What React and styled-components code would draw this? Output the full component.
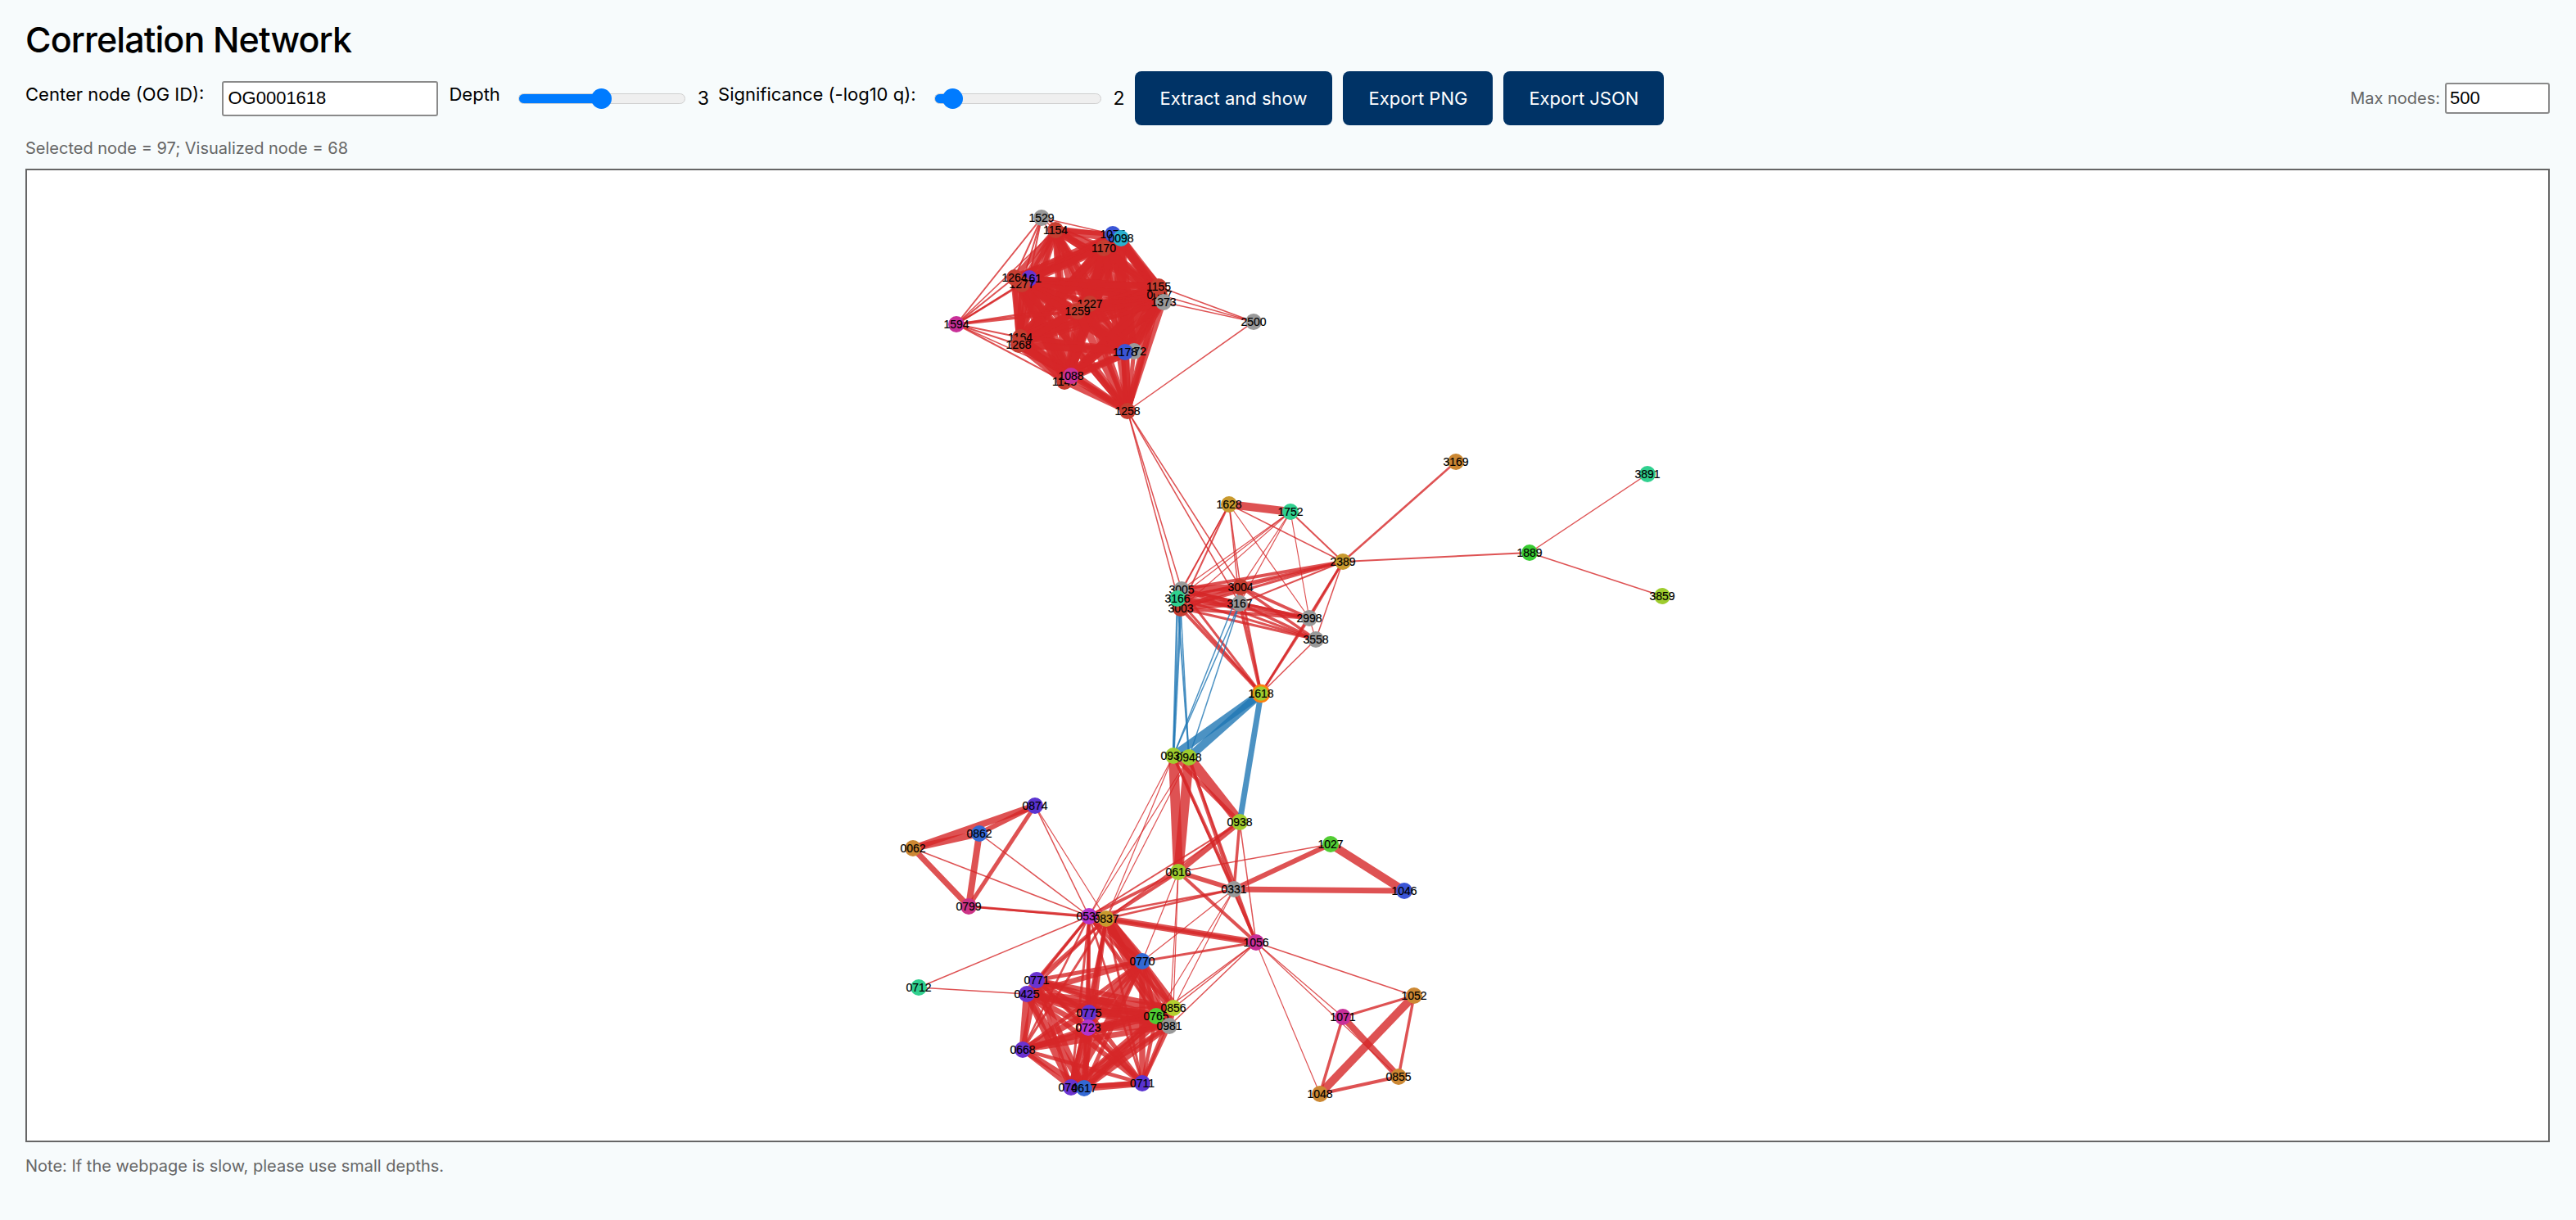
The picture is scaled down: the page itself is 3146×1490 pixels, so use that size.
import React from 'react'
import styled, { createGlobalStyle } from 'styled-components'

const GlobalStyle = createGlobalStyle`
  html, body {
    margin: 0;
    background: #f7fbfc;
    font-family: Inter, "Noto Sans", sans-serif;
  }
`

const Page = styled.div`
  box-sizing: border-box;
  height: 1490px;
  padding: 24px 32px 0 31px;
  display: flex;
  flex-direction: column;
  overflow: hidden;
`

const Title = styled.h1`
  margin: 0 0 15px;
  font-size: 43px;
  line-height: 48px;
  font-weight: 500;
  letter-spacing: -0.9px;
  color: #000;
`

const Toolbar = styled.div`
  display: flex;
  align-items: center;
  height: 66px;
  margin-bottom: 14px;
`

const Label = styled.label`
  font-size: 22px;
  color: #000;
  padding-bottom: 10px;
  margin-right: ${p => p.$after || 0}px;
  white-space: nowrap;
`

const TextInput = styled.input`
  box-sizing: border-box;
  width: 264px;
  height: 43px;
  padding: 0 5px;
  margin-right: 13px;
  background: #fff;
  border: 2px solid #8a8a8a;
  border-radius: 3px;
  font-family: "Liberation Sans", Arial, sans-serif;
  font-size: 22px;
  color: #000;
`

const Slider = styled.input`
  appearance: none;
  -webkit-appearance: none;
  width: 204px;
  height: 26px;
  margin: 0 15px 0 ${p => p.$before}px;
  background: transparent;

  &::-webkit-slider-runnable-track {
    box-sizing: border-box;
    height: 13px;
    border: 1px solid #cfcfcf;
    border-radius: 7px;
    background: linear-gradient(
      to right,
      #007bff ${p => p.$fill}%,
      #efefef ${p => p.$fill}%
    );
  }

  &::-webkit-slider-thumb {
    -webkit-appearance: none;
    width: 25px;
    height: 25px;
    margin-top: -7px;
    border: none;
    border-radius: 50%;
    background: #007bff;
  }
`

const Value = styled.span`
  font-size: 23px;
  margin-right: ${p => p.$after}px;
  color: #000;
`

const Button = styled.button`
  height: 66px;
  padding: 0 31px;
  margin-right: 13px;
  background: #003366;
  border: none;
  border-radius: 8px;
  color: #fff;
  font-family: Inter, "Noto Sans", sans-serif;
  font-size: 22px;
  white-space: nowrap;
`

const MaxGroup = styled.div`
  margin-left: auto;
  display: flex;
  align-items: center;
  gap: 6px;
  font-size: 20px;
  color: #666;
`

const SmallInput = styled.input`
  box-sizing: border-box;
  width: 128px;
  height: 38px;
  padding: 0 4px;
  background: #fff;
  border: 2px solid #8a8a8a;
  border-radius: 3px;
  font-family: "Liberation Sans", Arial, sans-serif;
  font-size: 22px;
  color: #000;
`

const Muted = styled.div`
  font-size: 20px;
  line-height: 28px;
  color: #666;
  margin: ${p => p.$margin};
`

const GraphBox = styled.div`
  box-sizing: border-box;
  width: 100%;
  height: 1189px;
  background: #fff;
  border: 2px solid #666;
`

const GraphSvg = styled.svg`
  display: block;
  width: 100%;
  height: 100%;
`

const NodeLabel = styled.text`
  font-family: "Liberation Sans", Arial, sans-serif;
  font-size: 14px;
  fill: #000;
  stroke: #000;
  stroke-width: 0.2px;
  text-anchor: middle;
  dominant-baseline: central;
`

const GRAY = '#999999'
const RUST = '#c63d30'
const GOLD = '#c99a2e'
const ORANGE = '#cc8833'
const LIME = '#9ecc2e'
const TEAL = '#30d08f'
const VIOLET = '#6a33d0'
const INDIGO = '#5a33d0'
const AZURE = '#3369d4'
const ROYAL = '#3a55d6'
const PINK = '#c82f98'

// id, x, y, colour (draw order matters, later nodes cover earlier labels)
const nodes = [
  ['1529', 1272, 266, GRAY], ['1154', 1289, 281, RUST], ['1075', 1359, 286, ROYAL],
  ['0098', 1369, 291, '#2ab0cf'], ['1170', 1348, 303, RUST], ['1161', 1257, 340, VIOLET],
  ['1277', 1248, 347, RUST], ['1264', 1239, 339, RUST], ['0097', 1416, 360, RUST],
  ['1155', 1415, 350, RUST], ['1373', 1421, 369, GRAY], ['2500', 1531, 393, GRAY],
  ['1227', 1331, 371, RUST], ['1259', 1316, 380, RUST], ['1594', 1168, 396, PINK],
  ['1164', 1246, 412, RUST], ['1268', 1244, 421, RUST], ['1172', 1385, 429, GRAY],
  ['1178', 1374, 430, ROYAL], ['1145', 1300, 466, RUST], ['1088', 1308, 459, PINK],
  ['1258', 1377, 502, RUST],
  ['3169', 1778, 564, ORANGE], ['3891', 2012, 579, TEAL], ['1628', 1501, 616, GOLD],
  ['1752', 1576, 625, TEAL], ['2389', 1640, 686, GOLD], ['1889', 1868, 675, '#39cc33'],
  ['3859', 2030, 728, LIME], ['3005', 1443, 720, GRAY], ['3003', 1442, 743, RUST],
  ['3166', 1438, 731, TEAL], ['3004', 1515, 717, RUST], ['3167', 1514, 737, GRAY],
  ['2998', 1599, 755, GRAY], ['3558', 1607, 781, GRAY], ['1618', 1540, 847, LIME, true],
  ['0931', 1433, 923, LIME], ['0948', 1452, 925, LIME], ['0874', 1264, 984, INDIGO],
  ['0862', 1196, 1018, AZURE], ['0062', 1115, 1036, ORANGE], ['0938', 1514, 1004, LIME],
  ['1027', 1625, 1031, '#52cc33'], ['0616', 1439, 1065, LIME], ['0331', 1507, 1086, GRAY],
  ['1046', 1715, 1088, ROYAL], ['0799', 1183, 1107, '#cc3386'], ['0535', 1330, 1119, '#b333cc'],
  ['0837', 1351, 1122, GOLD], ['1056', 1534, 1151, PINK], ['0770', 1395, 1174, AZURE],
  ['0712', 1122, 1206, TEAL], ['0425', 1254, 1214, VIOLET], ['0771', 1266, 1197, VIOLET],
  ['1052', 1727, 1216, ORANGE], ['0765', 1412, 1241, '#4fcc33'], ['0856', 1433, 1231, '#b5d030'],
  ['0981', 1428, 1253, GRAY], ['0775', 1330, 1237, VIOLET], ['1071', 1640, 1242, PINK],
  ['0723', 1329, 1255, '#b333cc'], ['0668', 1249, 1282, VIOLET], ['0855', 1708, 1315, ORANGE],
  ['0741', 1308, 1328, VIOLET], ['0617', 1324, 1329, AZURE], ['0711', 1395, 1323, INDIGO],
  ['1048', 1612, 1336, ORANGE],
]

const pos = Object.fromEntries(nodes.map(n => [n[0], [n[1], n[2]]]))

// repeatable pseudo-random width for the dense clusters
const spread = (a, b, min, max) => {
  const h = (Number(a) * 31 + Number(b) * 17) % 97
  return min + (h / 96) * (max - min)
}

const clique = (ids, min, max) => {
  const out = []
  ids.forEach((a, i) => ids.slice(i + 1).forEach(b => out.push([a, b, spread(a, b, min, max)])))
  return out
}

const fan = (from, list) => list.split(' ').map(item => {
  const [to, w] = item.split(':')
  return [from, to, Number(w)]
})

const redEdges = [
  ...clique(['1154', '1075', '0098', '1170', '1264', '1161', '1277', '1155', '0097', '1373', '1227',
    '1259', '1164', '1268', '1178', '1172', '1088', '1145', '1258'], 5, 10),
  ...fan('1529', '1154:1.5 1075:1.5 1170:1.5 1264:2 1277:2 1161:2 1227:1.5 1594:2'),
  ...fan('1594', '1264:2 1277:2.5 1161:2 1154:1.5 1259:3.5 1227:2.5 1164:2 1268:2 1145:2 1088:1.5'),
  ...fan('2500', '1155:1.5 0097:1.5 1373:1.5 1258:1.5'),
  ...fan('1258', '3005:1.5 3003:1.5 3004:1.5 3167:1.5'),
  ...fan('1628', '1752:10 3005:1.5 3166:1.5 3003:2 3004:1.5 3167:1.5 2389:1.5 2998:1.2'),
  ...fan('1752', '3005:1.2 3166:1.2 3003:1.2 3004:1.2 3167:1.2 2389:2 2998:1.2'),
  ...fan('2389', '3005:4 3004:3 3166:3 3003:3 3167:2 2998:3 3558:1.5 1618:2.5 3169:2.5 1889:2'),
  ...fan('1889', '3891:1.5 3859:1.5'),
  ...fan('3004', '3005:8 3166:6 3003:6 2998:4 3558:3.5 1618:3'),
  ...fan('3167', '3005:5 3166:5 3003:6 2998:4 3558:3.5 1618:4'),
  ...fan('3003', '2998:4 3558:3 1618:4'),
  ...fan('3166', '2998:4 3558:3 1618:3'),
  ...fan('3005', '2998:3 3558:3 1618:3'),
  ...fan('2998', '3558:1.2 1618:3'),
  ['3558', '1618', 1.5],
  ...fan('0948', '0938:12 0616:12 0331:4 1056:2.5 0535:1.2 0837:1.2'),
  ...fan('0931', '0938:5 0616:12 0331:4 1056:2.5 0535:1.2 0837:1.2'),
  ...fan('0938', '0616:7 0331:3.5 1056:1.5 0837:2 0535:2'),
  ...fan('0616', '0331:6 1056:4 0535:4 0837:4 0770:1.2 0856:1.2 0981:1.2'),
  ...fan('0331', '1056:4 1027:6 1046:7 0535:2.5 0837:2.5 0770:1.2 0856:1.2 0765:1.2'),
  ...fan('1027', '1046:10 0616:1.5'),
  ...fan('1056', '0837:8 0535:4 0770:3 0981:1.5 0856:1.5 0765:1.5 1071:1.2 0855:1.2 1052:1.5 1048:1.2'),
  ...fan('1071', '1052:3 1048:3.5 0855:8'),
  ...fan('1052', '1048:10 0855:3.5'),
  ['1048', '0855', 4],
  ...fan('0062', '0874:8 0862:8 0799:7 0535:1.5'),
  ...fan('0862', '0874:6 0799:8 0535:1.5'),
  ...fan('0874', '0799:5 0535:1.5 0837:1.2'),
  ...fan('0799', '0535:3 0837:2'),
  ...fan('0712', '0535:1.5 0425:1.5'),
  ...clique(['0770', '0771', '0425', '0775', '0723', '0856', '0765', '0981', '0668', '0741', '0617',
    '0711'], 4, 9),
  ...fan('0837', '0535:3 0856:14 0770:12 0765:10 0981:8 0771:4 0425:3 0775:4 0723:4 0668:3 0741:3 0617:4 0711:3'),
  ...fan('0535', '0856:4 0770:4 0765:3 0981:3 0771:3.5 0425:3 0775:3 0723:4 0668:2.5 0741:3 0617:3 0711:2.5'),
]

const blueEdges = [
  ...fan('1618', '0931:10 0948:10 0938:7'),
  ...fan('3003', '0931:3 0948:1.5'),
  ...fan('3166', '0931:2.5 0948:2'),
  ...fan('3167', '0931:1.5 0948:1.5'),
  ['3004', '0931', 1.5],
]

const Edge = ({ a, b, w, color }) => (
  <line x1={pos[a][0]} y1={pos[a][1]} x2={pos[b][0]} y2={pos[b][1]}
    stroke={color} strokeWidth={w} strokeOpacity="0.8" />
)

const Network = () => (
  <GraphSvg viewBox="33 208 3079 1185" preserveAspectRatio="xMinYMin meet">
    {redEdges.map(([a, b, w]) => <Edge key={a + b} a={a} b={b} w={w} color="#d62728" />)}
    {blueEdges.map(([a, b, w]) => <Edge key={a + b} a={a} b={b} w={w} color="#1f77b4" />)}
    {nodes.map(([id, x, y, fill, center]) => (
      <g key={id}>
        <circle cx={x} cy={y} r="10" fill={fill}
          stroke={center ? '#ff7f0e' : 'none'} strokeWidth={center ? 2.5 : 0} />
        <NodeLabel x={x} y={y}>{id}</NodeLabel>
      </g>
    ))}
  </GraphSvg>
)

export default function App() {
  return (
    <Page>
      <GlobalStyle />
      <Title>Correlation Network</Title>
      <Toolbar>
        <Label $after={22}>Center node (OG ID):</Label>
        <TextInput defaultValue="OG0001618" />
        <Label>Depth</Label>
        <Slider type="range" min="1" max="5" defaultValue="3" $before={22} $fill={50} />
        <Value $after={11}>3</Value>
        <Label>Significance (-log10 q):</Label>
        <Slider type="range" min="1" max="20" defaultValue="2" $before={22} $fill={11} />
        <Value $after={12}>2</Value>
        <Button>Extract and show</Button>
        <Button>Export PNG</Button>
        <Button>Export JSON</Button>
        <MaxGroup>
          Max nodes:
          <SmallInput defaultValue="500" />
        </MaxGroup>
      </Toolbar>
      <Muted $margin="0 0 11px">Selected node = 97; Visualized node = 68</Muted>
      <GraphBox>
        <Network />
      </GraphBox>
      <Muted $margin="15px 0 0">Note: If the webpage is slow, please use small depths.</Muted>
    </Page>
  )
}
